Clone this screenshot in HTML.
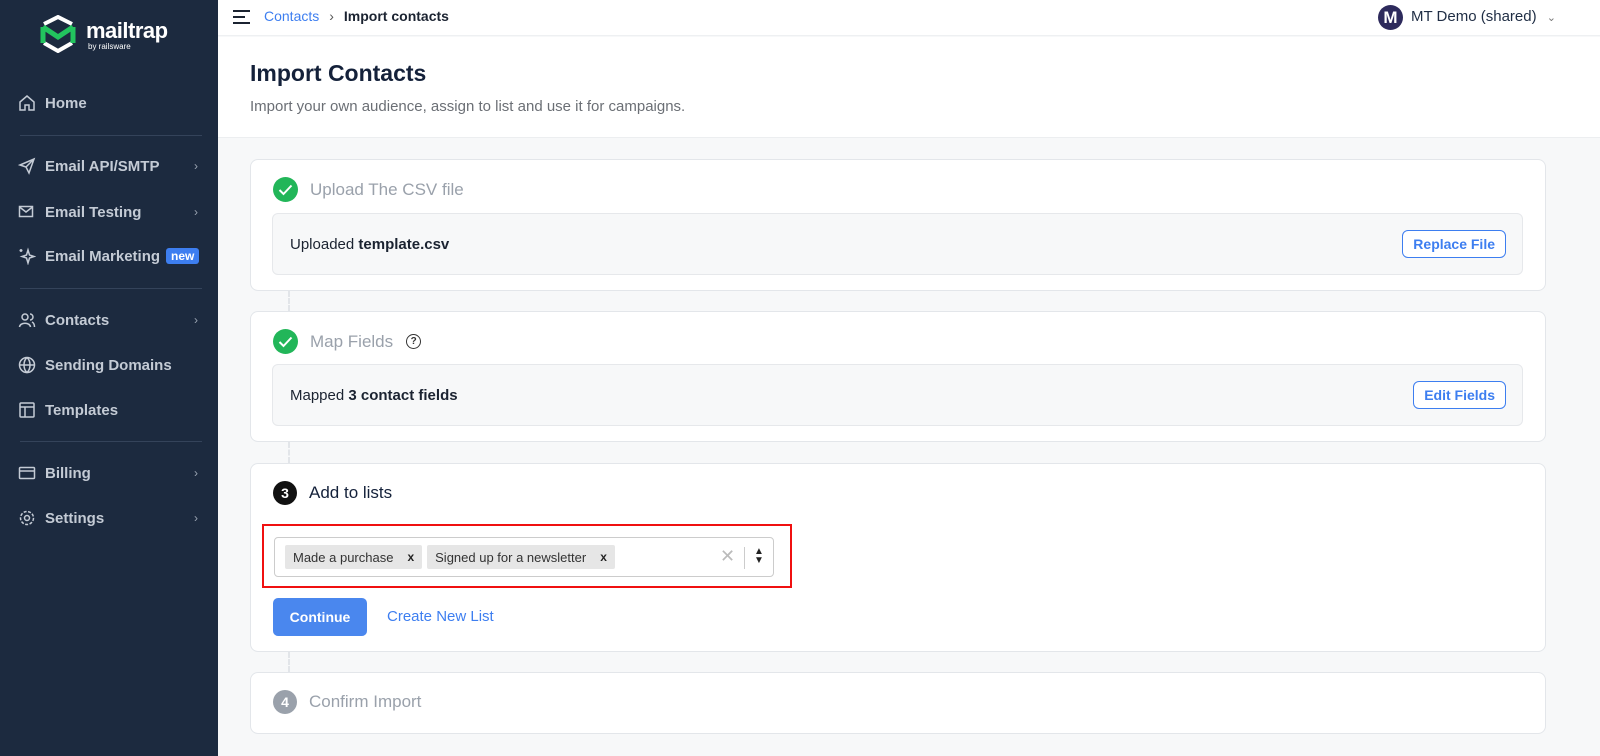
<!DOCTYPE html>
<html><head><meta charset="utf-8"><style>
*{box-sizing:border-box;margin:0;padding:0}
body{width:1600px;height:756px;overflow:hidden;font-family:"Liberation Sans",Arial,sans-serif;background:#f7f8f9;position:relative;color:#1b2331}
.sb{position:absolute;left:0;top:0;width:218px;height:756px;background:#1c2a3f;color:#c9d0da}
.it{position:absolute;left:18px;height:20px;display:flex;align-items:center;font-size:15px;font-weight:bold;color:#c4cbd5;width:182px}
.it svg{width:18px;height:18px;margin-right:9px;stroke:#c4cbd5;fill:none;stroke-width:1.5}
.it .ch{position:absolute;right:2px;font-size:12px;font-weight:normal;color:#9aa4b2}
.hr{position:absolute;left:20px;width:182px;height:1px;background:#34435a}
.top{position:absolute;left:218px;top:0;right:0;height:36px;background:#fff;border-bottom:1px solid #eef0f2}
.hd{position:absolute;left:218px;top:37px;right:0;height:101px;background:#fff;border-bottom:1px solid #eceef0}
.card{position:absolute;left:250px;width:1296px;background:#fff;border:1px solid #e3e6ea;border-radius:8px}
.inner{position:absolute;left:21px;right:22px;background:#f7f8f9;border:1px solid #e6e8eb;border-radius:6px;font-size:15px;display:flex;align-items:center;padding-left:17px}
.step{position:absolute;left:22px;top:17px;display:flex;align-items:center;font-size:17px;color:#9aa1ab}
.ok{width:25px;height:25px;border-radius:50%;background:#22b659;margin-right:12px;display:flex;align-items:center;justify-content:center}
.btn{position:absolute;right:16px;border:1px solid #3d7ef0;color:#3d7ef0;border-radius:6px;font-size:14px;font-weight:bold;height:28px;padding:0 10px;display:flex;align-items:center;background:#fff}
.dash{position:absolute;left:288px;width:0;border-left:2px dashed #e2e5e9}
.tag{background:#e6e6e6;height:24px;display:flex;align-items:center;padding:0 8px;font-size:13px;color:#333;margin-right:5px;border-radius:2px}
.tag b{margin-left:14px;font-size:12px;color:#222}
</style></head><body>
<div class="sb">
 <svg style="position:absolute;left:40px;top:15px" width="36" height="38" viewBox="0 0 36 38"><path d="M4 9 L18 2 L32 9" stroke="#fff" stroke-width="4" fill="none"/><path d="M4 28 L18 36 L32 28" stroke="#fff" stroke-width="4" fill="none"/><path d="M3 12 V28 M33 12 V28 M3 12 L18 22 L33 12" stroke="#22c45e" stroke-width="5" fill="none"/></svg>
 <div style="position:absolute;left:86px;top:18px;color:#fff;font-weight:bold;font-size:22px;letter-spacing:-0.5px">mailtrap</div>
 <div style="position:absolute;left:88px;top:42px;color:#fff;font-size:8px">by railsware</div>
 <div class="it" style="top:93px"><svg viewBox="0 0 18 18"><path d="M2 8 L9 2 L16 8 V16 H11 V11 H7 V16 H2 Z"/></svg>Home</div>
 <div class="hr" style="top:135px"></div>
 <div class="it" style="top:156px"><svg viewBox="0 0 18 18"><path d="M2 8 L16 2 L11 16 L8 10 Z M8 10 L16 2"/></svg>Email API/SMTP<span class="ch">›</span></div>
 <div class="it" style="top:202px"><svg viewBox="0 0 18 18"><rect x="1.5" y="3.5" width="13" height="10"/><path d="M1.5 4 L8 9 L14.5 4"/></svg>Email Testing<span class="ch">›</span></div>
 <div class="it" style="top:246px"><svg viewBox="0 0 18 18"><path d="M10 3 L11.5 8 L16 9.5 L11.5 11 L10 16 L8.5 11 L4 9.5 L8.5 8 Z M3 2 V5 M1.5 3.5 H4.5"/></svg>Email Marketing<span style="margin-left:6px;background:#3d7ef0;color:#fff;font-size:12px;padding:1px 5px;border-radius:3px">new</span></div>
 <div class="hr" style="top:288px"></div>
 <div class="it" style="top:310px"><svg viewBox="0 0 18 18"><circle cx="7" cy="6" r="3"/><path d="M1.5 16 C2 11 12 11 12.5 16 M12 3 A3 3 0 0 1 12 9 M14 11 C16 12 16.5 14 16.5 16"/></svg>Contacts<span class="ch">›</span></div>
 <div class="it" style="top:355px"><svg viewBox="0 0 18 18"><circle cx="9" cy="9" r="7.5"/><path d="M1.5 9 H16.5 M9 1.5 C5 5 5 13 9 16.5 C13 13 13 5 9 1.5"/></svg>Sending Domains</div>
 <div class="it" style="top:400px"><svg viewBox="0 0 18 18"><rect x="2" y="2" width="14" height="14" rx="1"/><path d="M2 6 H16 M7 6 V16"/></svg>Templates</div>
 <div class="hr" style="top:441px"></div>
 <div class="it" style="top:463px"><svg viewBox="0 0 18 18"><rect x="1.5" y="3.5" width="15" height="11" rx="1"/><path d="M1.5 7 H16.5"/></svg>Billing<span class="ch">›</span></div>
 <div class="it" style="top:508px"><svg viewBox="0 0 18 18"><circle cx="9" cy="9" r="2.5"/><circle cx="9" cy="9" r="6.5" stroke-dasharray="3 1.5"/></svg>Settings<span class="ch">›</span></div>
</div>
<div class="top">
 <div style="position:absolute;left:15px;top:10px;width:17px"><div style="height:2px;background:#1b2331;margin-bottom:4px"></div><div style="height:2px;background:#1b2331;margin-bottom:4px;width:12px"></div><div style="height:2px;background:#1b2331"></div></div>
 <div style="position:absolute;left:46px;top:8px;font-size:14px"><span style="color:#3d7ef0">Contacts</span><span style="color:#555;margin:0 10px">›</span><b>Import contacts</b></div>
 <div style="position:absolute;left:1160px;top:5px;width:25px;height:25px;border-radius:50%;background:#2d2a5c;color:#fff;font-weight:bold;font-size:17px;text-align:center;line-height:25px">M</div>
 <div style="position:absolute;left:1193px;top:8px;font-size:15px;color:#1f2d44">MT Demo (shared) <span style="font-size:11px;color:#777;margin-left:6px">⌄</span></div>
</div>
<div class="hd">
 <div style="position:absolute;left:32px;top:23px;font-size:23px;font-weight:bold;color:#14213a">Import Contacts</div>
 <div style="position:absolute;left:32px;top:61px;font-size:15px;color:#6b6f75">Import your own audience, assign to list and use it for campaigns.</div>
</div>
<div class="dash" style="top:291px;height:20px"></div>
<div class="dash" style="top:442px;height:21px"></div>
<div class="dash" style="top:652px;height:20px"></div>
<div class="card" style="top:159px;height:132px">
 <div class="step"><div class="ok"><svg width="15" height="12" viewBox="0 0 15 12"><path d="M1.5 6 L5.5 10 L13.5 1.5" stroke="#fff" stroke-width="2" fill="none"/></svg></div>Upload The CSV file</div>
 <div class="inner" style="top:53px;height:62px">Uploaded&nbsp;<b>template.csv</b><div class="btn" style="top:16px">Replace File</div></div>
</div>
<div class="card" style="top:311px;height:131px">
 <div class="step"><div class="ok"><svg width="15" height="12" viewBox="0 0 15 12"><path d="M1.5 6 L5.5 10 L13.5 1.5" stroke="#fff" stroke-width="2" fill="none"/></svg></div>Map Fields<span style="margin-left:13px;width:15px;height:15px;border:1.5px solid #333;border-radius:50%;font-size:10px;color:#333;display:inline-flex;align-items:center;justify-content:center;font-weight:bold">?</span></div>
 <div class="inner" style="top:52px;height:62px">Mapped&nbsp;<b>3 contact fields</b><div class="btn" style="top:16px">Edit Fields</div></div>
</div>
<div class="card" style="top:463px;height:189px">
 <div class="step" style="color:#14213a"><div class="ok" style="background:#111;width:24px;height:24px;color:#fff;font-weight:bold;font-size:14px">3</div>Add to lists</div>
 <div style="position:absolute;left:11px;top:60px;width:530px;height:64px;border:2px solid #f01010"></div>
 <div style="position:absolute;left:23px;top:73px;width:500px;height:40px;border:1px solid #ccc;border-radius:4px;background:#fff;display:flex;align-items:center;padding-left:10px">
  <div class="tag">Made a purchase<b>x</b></div><div class="tag">Signed up for a newsletter<b>x</b></div>
  <span style="position:absolute;left:445px;top:8px;color:#bbb;font-size:18px">✕</span>
  <div style="position:absolute;left:469px;top:9px;width:1px;height:22px;background:#ccc"></div>
  <span style="position:absolute;left:479px;top:9px;font-size:10px;line-height:9px;color:#222">▲<br>▼</span>
 </div>
 <div style="position:absolute;left:22px;top:134px;width:94px;height:38px;background:#4a87ee;border-radius:5px;color:#fff;font-weight:bold;font-size:14px;display:flex;align-items:center;justify-content:center">Continue</div>
 <div style="position:absolute;left:136px;top:144px;color:#3d7ef0;font-size:15px">Create New List</div>
</div>
<div class="card" style="top:672px;height:62px">
 <div class="step"><div class="ok" style="background:#9aa1ab;width:24px;height:24px;color:#fff;font-weight:bold;font-size:14px">4</div>Confirm Import</div>
</div>
</body></html>
